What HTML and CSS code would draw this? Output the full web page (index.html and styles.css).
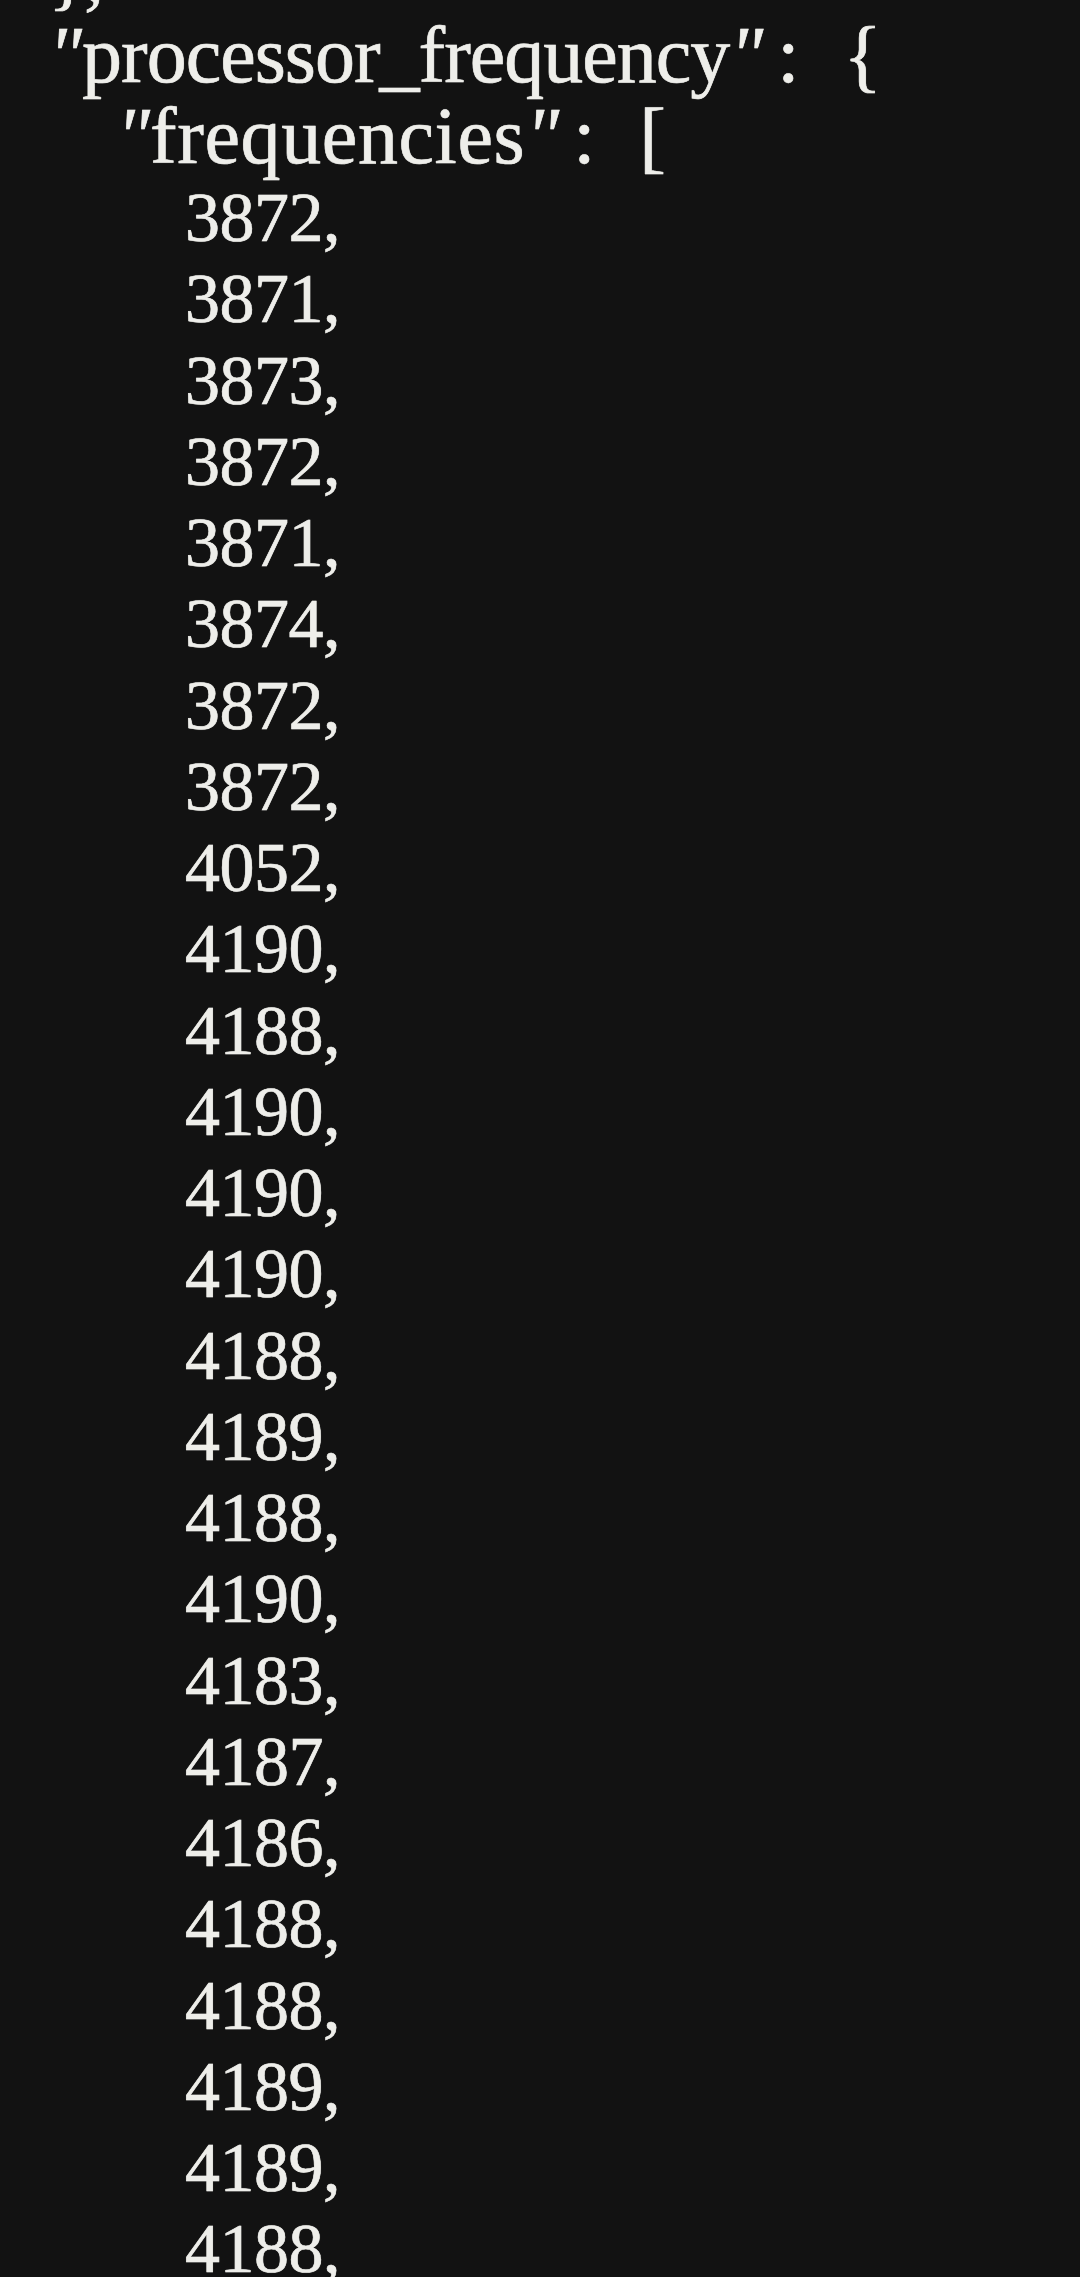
FILE: index.html
```html
<!DOCTYPE html>
<html lang="en">
<head>
<meta charset="utf-8">
<title>processor_frequency</title>
<link rel="stylesheet" href="styles.css">
</head>
<body>
<main class="console">
  <div class="line key-line lvl1"><span class="brace">}</span><span class="comma">,</span></div>
  <div class="line key-line lvl1"><span class="q">"</span><span class="key k1">processor_frequency</span><span class="q">"</span><span class="colon">:</span><span class="open">{</span></div>
  <div class="line key-line lvl2"><span class="q">"</span><span class="key k2">frequencies</span><span class="q">"</span><span class="colon">:</span><span class="open">[</span></div>
  <div class="line num">3872,</div>
  <div class="line num">3871,</div>
  <div class="line num">3873,</div>
  <div class="line num">3872,</div>
  <div class="line num">3871,</div>
  <div class="line num">3874,</div>
  <div class="line num">3872,</div>
  <div class="line num">3872,</div>
  <div class="line num">4052,</div>
  <div class="line num">4190,</div>
  <div class="line num">4188,</div>
  <div class="line num">4190,</div>
  <div class="line num">4190,</div>
  <div class="line num">4190,</div>
  <div class="line num">4188,</div>
  <div class="line num">4189,</div>
  <div class="line num">4188,</div>
  <div class="line num">4190,</div>
  <div class="line num">4183,</div>
  <div class="line num">4187,</div>
  <div class="line num">4186,</div>
  <div class="line num">4188,</div>
  <div class="line num">4188,</div>
  <div class="line num">4189,</div>
  <div class="line num">4189,</div>
  <div class="line num">4188,</div>
</main>
</body>
</html>
```

FILE: styles.css
```css
html, body {
  margin: 0;
  padding: 0;
  background: #121212;
  overflow: hidden;
}

.console {
  margin-top: -66.75px;
  color: #eeeeea;
  font-family: "Liberation Serif", "Times New Roman", serif;
  -webkit-text-stroke: 0.6px #eeeeea;
  text-shadow: 0 0 1px rgba(238, 238, 234, 0.6);
  display: flex;
  flex-direction: column;
}

.line {
  height: 81.25px;
  line-height: 81.25px;
  white-space: pre;
}

.key-line {
  font-size: 80px;
  display: flex;
  align-items: baseline;
}

.lvl1 { padding-left: 48px; }
.lvl2 { padding-left: 116px; }

.q {
  display: inline-block;
  width: 34px;
  text-align: center;
  font-style: italic;
}

.brace {
  display: inline-block;
  width: 34px;
  text-align: left;
}

.comma {
  display: inline-block;
  width: 34px;
  padding-left: 2px;
}

.key.k1 { letter-spacing: -1px; }
.key.k2 { letter-spacing: 0.6px; }

.colon {
  display: inline-block;
  width: 50px;
  text-align: center;
}

.open {
  display: inline-block;
  margin-left: 30px;
}

.num {
  font-size: 70px;
  padding-left: 185px;
  letter-spacing: -0.5px;
}
```
